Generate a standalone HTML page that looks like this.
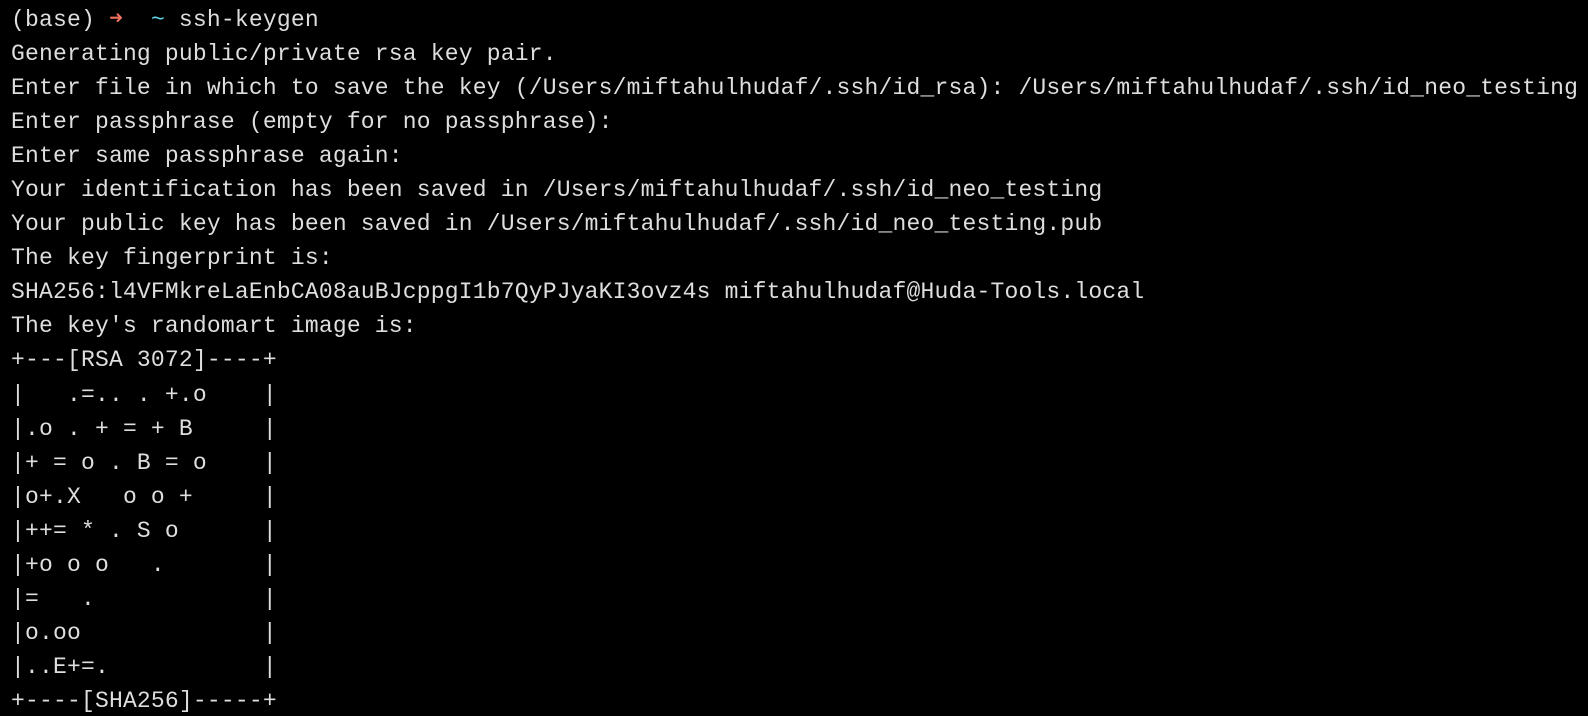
<!DOCTYPE html>
<html><head><meta charset="utf-8"><style>
html,body{margin:0;padding:0;background:#000;width:1588px;height:716px;overflow:hidden}
pre{margin:0;padding:3px 0 0 11px;font-family:"Liberation Mono",monospace;font-size:23px;letter-spacing:0.19px;line-height:34.05px;color:#dedede;white-space:pre}
.r{color:#f0705f;display:inline-block;width:13.99px;font-size:17px;text-align:center;vertical-align:top}.c{color:#5fd8e8}
</style></head><body><pre>(base) <span class="r">➜</span>  <span class="c">~</span> ssh-keygen
Generating public/private rsa key pair.
Enter file in which to save the key (/Users/miftahulhudaf/.ssh/id_rsa): /Users/miftahulhudaf/.ssh/id_neo_testing
Enter passphrase (empty for no passphrase):
Enter same passphrase again:
Your identification has been saved in /Users/miftahulhudaf/.ssh/id_neo_testing
Your public key has been saved in /Users/miftahulhudaf/.ssh/id_neo_testing.pub
The key fingerprint is:
SHA256:l4VFMkreLaEnbCA08auBJcppgI1b7QyPJyaKI3ovz4s miftahulhudaf@Huda-Tools.local
The key's randomart image is:
+---[RSA 3072]----+
|   .=.. . +.o    |
|.o . + = + B     |
|+ = o . B = o    |
|o+.X   o o +     |
|++= * . S o      |
|+o o o   .       |
|=   .            |
|o.oo             |
|..E+=.           |
+----[SHA256]-----+</pre></body></html>
